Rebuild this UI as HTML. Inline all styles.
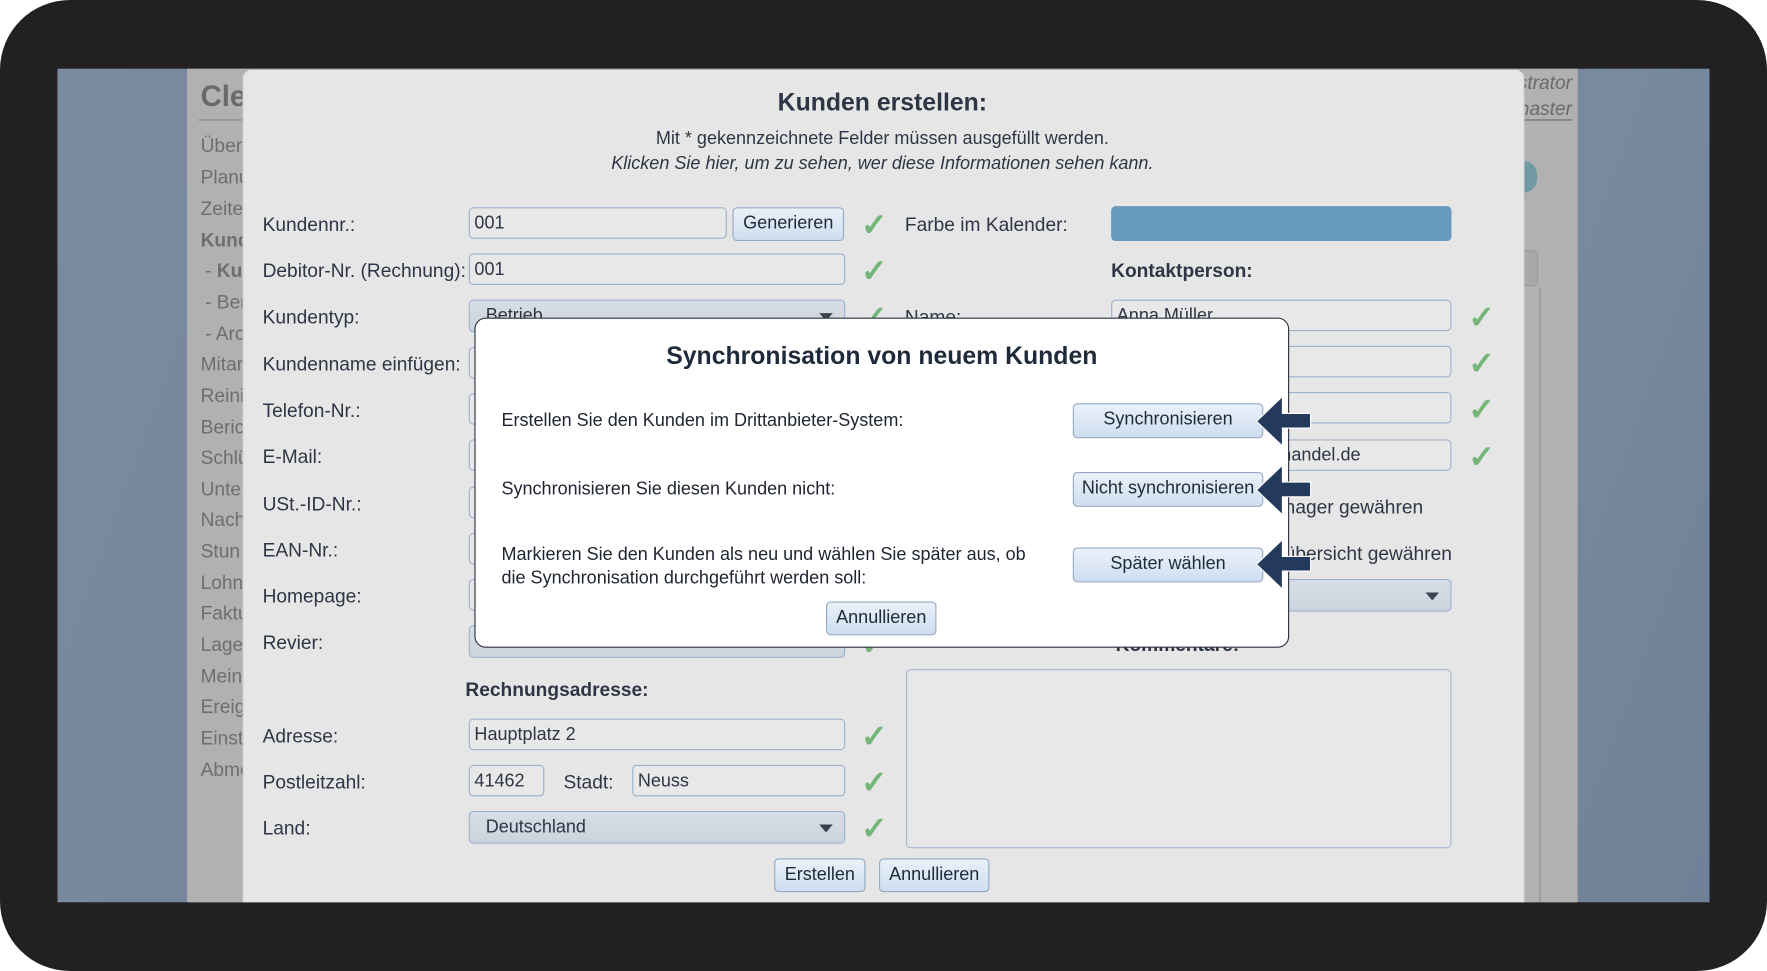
<!DOCTYPE html>
<html><head><meta charset="utf-8"><style>
html,body{margin:0;padding:0;width:1767px;height:971px;overflow:hidden;background:#fff;}
#s{position:absolute;left:0;top:0;width:1568px;height:862px;transform:scale(1.12691,1.12645);transform-origin:0 0;font-family:"Liberation Sans",sans-serif;color:#2e3645;}
.a{position:absolute;}
.frame{left:0;top:0;width:1568px;height:862px;background:#222021;border-radius:62px;}
.inner{left:51px;top:61px;width:1466px;height:740px;background:linear-gradient(110deg,#7a8ba0 0%,#71829a 60%,#788aa0 80%,#6f8097 100%);overflow:hidden;}
.panel{left:166px;top:61px;width:1234px;height:740px;background:#b1b1b1;}
.side{left:178px;font-size:17px;color:#6e6e6e;}
.modal{left:215px;top:62px;width:1136px;height:739px;background:#e6e6e6;border-radius:8px 8px 0 0;border-left:1px solid #cfcfcf;border-right:1px solid #cfcfcf;}
.lbl{font-size:17px;color:#2e3645;}
.inp{height:28px;border:1px solid #9fb2cc;border-radius:4px;background:#e8e8e8;box-sizing:border-box;font-size:16px;padding:5px 4px;color:#2e3645;}
.sel{height:29px;border:1px solid #9fb2cc;border-radius:4px;background:linear-gradient(#d8dee6,#cbd3de);box-sizing:border-box;font-size:16px;padding:5px 14px;color:#2e3645;}
.btn{height:30px;border:1px solid #93a9c6;border-radius:4px;background:linear-gradient(#eaf1f9,#cfdeef);box-sizing:border-box;font-size:16px;text-align:center;line-height:28px;color:#1f2a3a;}
.chk{font-size:28px;font-weight:bold;color:#74b67a;line-height:1;}
.tri{position:absolute;right:10px;top:11px;width:0;height:0;border-left:6px solid transparent;border-right:6px solid transparent;border-top:7px solid #3a4350;}
.arr{width:50px;height:46px;}
</style></head><body><div id="s">
<div class="a frame"></div>
<div class="a inner"></div>
<div class="a panel"></div>
<div class="a" style="left:178px;top:70px;font-size:26px;font-weight:bold;color:#6a6a6a">Cle</div>
<div class="a" style="left:176px;top:106px;width:40px;height:1px;background:#8a8a8a"></div>
<div class="a side" style="top:120px">Über</div>
<div class="a side" style="top:148px">Planu</div>
<div class="a side" style="top:176px">Zeite</div>
<div class="a side" style="top:204px;font-weight:bold">Kund</div>
<div class="a side" style="top:231px;left:182px">- <b>Ku</b></div>
<div class="a side" style="top:259px;left:182px">- Ber</div>
<div class="a side" style="top:287px;left:182px">- Arc</div>
<div class="a side" style="top:314px">Mitar</div>
<div class="a side" style="top:342px">Reini</div>
<div class="a side" style="top:370px">Beric</div>
<div class="a side" style="top:397px">Schlü</div>
<div class="a side" style="top:425px">Unte</div>
<div class="a side" style="top:452px">Nach</div>
<div class="a side" style="top:480px">Stun</div>
<div class="a side" style="top:508px">Lohn</div>
<div class="a side" style="top:535px">Faktu</div>
<div class="a side" style="top:563px">Lage</div>
<div class="a side" style="top:591px">Mein</div>
<div class="a side" style="top:618px">Ereig</div>
<div class="a side" style="top:646px">Einst</div>
<div class="a side" style="top:674px">Abme</div>
<div class="a" style="left:1330px;top:64px;font-size:17px;font-style:italic;color:#6a6a6a;text-align:right;width:65px">strator</div>
<div class="a" style="left:1330px;top:87px;font-size:17px;font-style:italic;color:#6a6a6a;text-align:right;width:65px">naster</div>
<div class="a" style="left:1352px;top:106px;width:43px;height:1px;background:#6a6a6a"></div>
<div class="a" style="left:1340px;top:143px;width:24px;height:28px;border-radius:14px;background:#6f9aa4"></div>
<div class="a" style="left:1340px;top:222px;width:23px;height:30px;border-radius:4px;background:#a8a8a8;border:1px solid #999"></div>
<div class="a" style="left:1350px;top:256px;width:15px;height:545px;border-left:1px solid #8e8e8e;border-right:1px solid #8e8e8e"></div>

<div class="a modal"></div>
<div class="a" style="left:215px;top:78px;width:1136px;text-align:center;font-size:22px;font-weight:bold">Kunden erstellen:</div>
<div class="a" style="left:215px;top:115px;width:1136px;text-align:center;font-size:16px">Mit * gekennzeichnete Felder müssen ausgefüllt werden.</div>
<div class="a" style="left:215px;top:137px;width:1136px;text-align:center;font-size:16px;font-style:italic">Klicken Sie hier, um zu sehen, wer diese Informationen sehen kann.</div>

<div class="a lbl" style="left:233px;top:190px">Kundennr.:</div>
<div class="a inp" style="left:416px;top:184px;width:229px">001</div>
<div class="a btn" style="left:650px;top:184px;width:99px">Generieren</div>
<div class="a chk" style="left:764px;top:186px">✓</div>
<div class="a lbl" style="left:233px;top:231px">Debitor-Nr. (Rechnung):</div>
<div class="a inp" style="left:416px;top:225px;width:334px">001</div>
<div class="a chk" style="left:764px;top:227px">✓</div>
<div class="a lbl" style="left:233px;top:272px">Kundentyp:</div>
<div class="a sel" style="left:416px;top:266px;width:334px">Betrieb<div class="tri"></div></div>
<div class="a chk" style="left:764px;top:268px">✓</div>
<div class="a lbl" style="left:233px;top:314px">Kundenname einfügen:</div>
<div class="a inp" style="left:416px;top:308px;width:334px"></div>
<div class="a lbl" style="left:233px;top:355px">Telefon-Nr.:</div>
<div class="a inp" style="left:416px;top:349px;width:334px"></div>
<div class="a lbl" style="left:233px;top:396px">E-Mail:</div>
<div class="a inp" style="left:416px;top:390px;width:334px"></div>
<div class="a lbl" style="left:233px;top:438px">USt.-ID-Nr.:</div>
<div class="a inp" style="left:416px;top:432px;width:334px"></div>
<div class="a lbl" style="left:233px;top:479px">EAN-Nr.:</div>
<div class="a inp" style="left:416px;top:473px;width:334px"></div>
<div class="a lbl" style="left:233px;top:520px">Homepage:</div>
<div class="a inp" style="left:416px;top:514px;width:334px"></div>
<div class="a lbl" style="left:233px;top:561px">Revier:</div>
<div class="a sel" style="left:416px;top:555px;width:334px"></div>
<div class="a chk" style="left:764px;top:558px">✓</div>

<div class="a lbl" style="left:803px;top:190px">Farbe im Kalender:</div>
<div class="a" style="left:986px;top:183px;width:302px;height:31px;border-radius:4px;background:#6899bf"></div>
<div class="a lbl" style="left:986px;top:231px;font-weight:bold">Kontaktperson:</div>
<div class="a lbl" style="left:803px;top:272px">Name:</div>
<div class="a inp" style="left:986px;top:266px;width:302px">Anna Müller</div>
<div class="a chk" style="left:1303px;top:268px">✓</div>
<div class="a inp" style="left:986px;top:307px;width:302px"></div>
<div class="a chk" style="left:1303px;top:309px">✓</div>
<div class="a inp" style="left:986px;top:348px;width:302px"></div>
<div class="a chk" style="left:1303px;top:350px">✓</div>
<div class="a inp" style="left:986px;top:390px;width:302px;padding-left:150px">handel.de</div>
<div class="a chk" style="left:1303px;top:392px">✓</div>
<div class="a lbl" style="left:1140px;top:441px">nager gewähren</div>
<div class="a lbl" style="left:1140px;top:482px">übersicht gewähren</div>
<div class="a sel" style="left:986px;top:514px;width:302px"><div class="tri"></div></div>
<div class="a lbl" style="left:990px;top:563px;font-weight:bold">Kommentare:</div>
<div class="a" style="left:804px;top:594px;width:484px;height:159px;border:1px solid #a5b6cc;border-radius:4px;box-sizing:border-box;background:#e8e8e8"></div>

<div class="a lbl" style="left:413px;top:603px;font-weight:bold">Rechnungsadresse:</div>
<div class="a lbl" style="left:233px;top:644px">Adresse:</div>
<div class="a inp" style="left:416px;top:638px;width:334px">Hauptplatz 2</div>
<div class="a chk" style="left:764px;top:640px">✓</div>
<div class="a lbl" style="left:233px;top:685px">Postleitzahl:</div>
<div class="a inp" style="left:416px;top:679px;width:67px">41462</div>
<div class="a lbl" style="left:500px;top:685px">Stadt:</div>
<div class="a inp" style="left:561px;top:679px;width:189px">Neuss</div>
<div class="a chk" style="left:764px;top:681px">✓</div>
<div class="a lbl" style="left:233px;top:726px">Land:</div>
<div class="a sel" style="left:416px;top:720px;width:334px">Deutschland<div class="tri"></div></div>
<div class="a chk" style="left:764px;top:722px">✓</div>
<div class="a btn" style="left:687px;top:762px;width:81px">Erstellen</div>
<div class="a btn" style="left:780px;top:762px;width:98px">Annullieren</div>

<div class="a" style="left:421px;top:282px;width:723px;height:293px;background:#fff;border:1px solid #2a3140;border-radius:10px;box-sizing:border-box"></div>
<div class="a" style="left:421px;top:303px;width:723px;text-align:center;font-size:22px;font-weight:bold;color:#1f2a3a">Synchronisation von neuem Kunden</div>
<div class="a" style="left:445px;top:365px;font-size:16px;color:#1f2530">Erstellen Sie den Kunden im Drittanbieter-System:</div>
<div class="a" style="left:445px;top:426px;font-size:16px;color:#1f2530">Synchronisieren Sie diesen Kunden nicht:</div>
<div class="a" style="left:445px;top:482px;font-size:16px;line-height:21px;color:#1f2530">Markieren Sie den Kunden als neu und wählen Sie später aus, ob<br>die Synchronisation durchgeführt werden soll:</div>
<div class="a btn" style="left:952px;top:358px;width:169px;height:31px">Synchronisieren</div>
<div class="a btn" style="left:952px;top:419px;width:169px;height:31px">Nicht synchronisieren</div>
<div class="a btn" style="left:952px;top:486px;width:169px;height:31px">Später wählen</div>
<div class="a btn" style="left:733px;top:534px;width:98px">Annullieren</div>

<svg class="a arr" style="left:1114px;top:351px" viewBox="0 0 50 46"><polygon points="1,23 24,1 24,16 49,16 49,29 24,29 24,45" fill="#243a5c" stroke="#fff" stroke-width="1"/></svg>
<svg class="a arr" style="left:1114px;top:412px" viewBox="0 0 50 46"><polygon points="1,23 24,1 24,16 49,16 49,29 24,29 24,45" fill="#243a5c" stroke="#fff" stroke-width="1"/></svg>
<svg class="a arr" style="left:1114px;top:478px" viewBox="0 0 50 46"><polygon points="1,23 24,1 24,16 49,16 49,29 24,29 24,45" fill="#243a5c" stroke="#fff" stroke-width="1"/></svg>
</div></body></html>
